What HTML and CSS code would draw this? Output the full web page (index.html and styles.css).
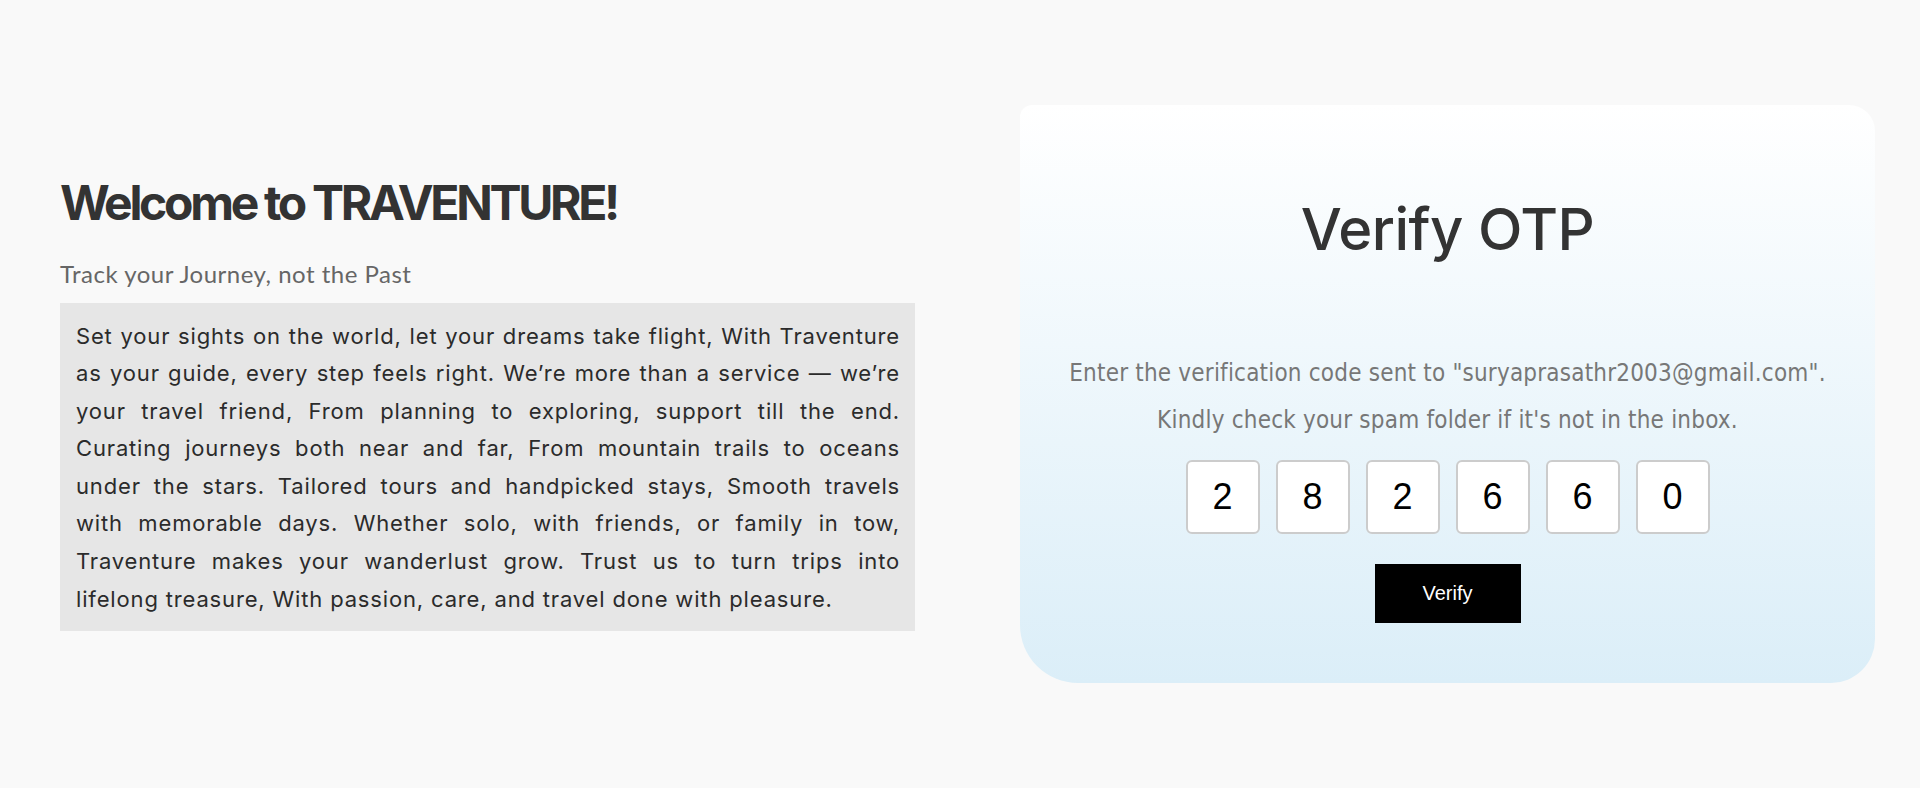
FILE: index.html
```html
<!DOCTYPE html>
<html lang="en">
<head>
<meta charset="utf-8">
<title>Traventure - Verify OTP</title>
<link rel="stylesheet" href="styles.css">
</head>
<body>
<main class="page">
  <section class="intro">
    <h1 class="intro-title">Welcome to TRAVENTURE!</h1>
    <p class="intro-tagline">Track your Journey, not the Past</p>
    <p class="intro-poem">Set your sights on the world, let your dreams take flight, With Traventure as your guide, every step feels right. We’re more than a service — we’re your travel friend, From planning to exploring, support till the end. Curating journeys both near and far, From mountain trails to oceans under the stars. Tailored tours and handpicked stays, Smooth travels with memorable days. Whether solo, with friends, or family in tow, Traventure makes your wanderlust grow. Trust us to turn trips into lifelong treasure, With passion, care, and travel done with pleasure.</p>
  </section>
  <section class="card">
    <h2 class="card-title">Verify OTP</h2>
    <p class="card-text">Enter the verification code sent to "suryaprasathr2003@gmail.com".<br>Kindly check your spam folder if it's not in the inbox.</p>
    <div class="otp-row">
      <input class="otp-box" type="text" maxlength="1" value="2">
      <input class="otp-box" type="text" maxlength="1" value="8">
      <input class="otp-box" type="text" maxlength="1" value="2">
      <input class="otp-box" type="text" maxlength="1" value="6">
      <input class="otp-box" type="text" maxlength="1" value="6">
      <input class="otp-box" type="text" maxlength="1" value="0">
    </div>
    <button class="verify-btn" type="button">Verify</button>
  </section>
</main>
</body>
</html>
```

FILE: styles.css
```css
* { box-sizing: border-box; }

html, body {
  margin: 0;
  padding: 0;
}

body {
  background: #f9f9f9;
  font-family: "Inter", "Liberation Sans", sans-serif;
  color: #333;
}

.page {
  min-height: 788px;
  display: flex;
  align-items: center;
  gap: 105px;
  padding: 0 45px 0 60px;
}

.intro {
  width: 855px;
  display: flex;
  flex-direction: column;
}

.intro-title {
  margin: 17px 0 0;
  font-family: "Inter", sans-serif;
  font-weight: 700;
  font-size: 48px;
  line-height: 58px;
  letter-spacing: -3.3px;
  color: #333;
}

.intro-tagline {
  margin: 28px 0 0;
  font-family: "Lato", sans-serif;
  font-weight: 400;
  font-size: 24px;
  line-height: 28.8px;
  letter-spacing: 0.5px;
  color: #666;
}

.intro-poem {
  margin: 14px 0 0;
  padding: 15px 15px 13px 16px;
  background: #e6e6e6;
  font-family: "Inter", sans-serif;
  font-size: 22px;
  line-height: 37.6px;
  letter-spacing: 0.84px;
  text-align: justify;
  color: #2b2b2b;
}

.card {
  width: 855px;
  height: 578px;
  display: flex;
  flex-direction: column;
  align-items: center;
  padding-top: 89px;
  border-radius: 12px 26px 44px 58px;
  background: linear-gradient(180deg, #ffffff 0%, #dbeef8 100%);
}

.card-title {
  margin: 0;
  font-family: "Inter", sans-serif;
  font-weight: 500;
  font-size: 58px;
  line-height: 70px;
  letter-spacing: -0.5px;
  color: #333;
}

.card-text {
  margin: 85.5px 0 0;
  font-family: "Liberation Sans Narrow", "DejaVu Sans Condensed", sans-serif;
  font-size: 24px;
  line-height: 47px;
  letter-spacing: 0.2px;
  text-align: center;
  color: #777;
}

.otp-row {
  margin-top: 16.5px;
  display: flex;
  gap: 16px;
}

.otp-box {
  width: 74px;
  height: 74px;
  padding: 0;
  border: 2px solid #cccccc;
  border-radius: 6px;
  background: #fff;
  font-family: "Liberation Sans", Arial, sans-serif;
  font-size: 36px;
  color: #000;
  text-align: center;
  outline: none;
}

.verify-btn {
  margin-top: 30px;
  width: 146px;
  height: 59px;
  border: 0;
  border-radius: 0;
  background: #000;
  color: #fff;
  font-family: "Liberation Sans", Arial, sans-serif;
  font-size: 20px;
  cursor: pointer;
}
```
